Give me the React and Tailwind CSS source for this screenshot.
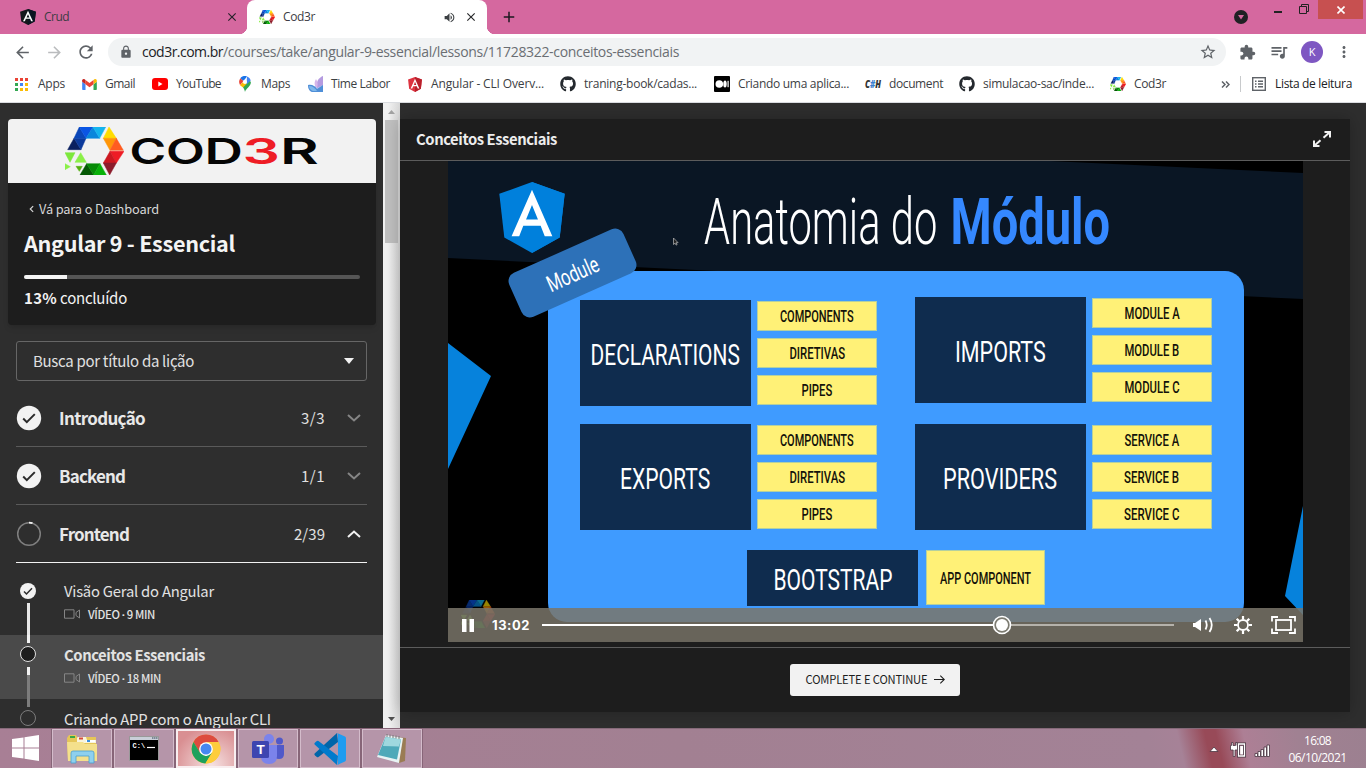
import { useLayoutEffect, useRef, useState } from "react";
import { FaGithub } from "react-icons/fa";
import {
  MdArrowBack,
  MdArrowForward,
  MdRefresh,
  MdLock,
  MdStarOutline,
  MdExtension,
  MdQueueMusic,
  MdMoreVert,
  MdClose,
  MdAdd,
  MdVolumeUp,
} from "react-icons/md";

// Text tracked so that its run takes exactly `w` pixels.
function Track({ w, children, className = "" }) {
  const ref = useRef(null);
  const [gap, setGap] = useState(0);
  useLayoutEffect(() => {
    const r = ref.current;
    const n = r.textContent.length;
    setGap((w - r.getBoundingClientRect().width) / n);
  }, [w]);
  return (
    <span ref={ref} className={"inline-block whitespace-pre " + className} style={{ letterSpacing: gap + "px" }}>
      {children}
    </span>
  );
}

// Text condensed or widened horizontally to `w` pixels.
function Stretch({ w, children, className = "" }) {
  const ref = useRef(null);
  const [scale, setScale] = useState(1);
  useLayoutEffect(() => {
    setScale(w / ref.current.offsetWidth);
  }, [w]);
  return (
    <span className={"flex justify-center " + className} style={{ width: w + "px" }}>
      <span ref={ref} className="inline-block shrink-0 whitespace-pre" style={{ transform: `scaleX(${scale})` }}>
        {children}
      </span>
    </span>
  );
}

const UI = "font-['Open_Sans',sans-serif]";
const SRC = "font-['Noto_Sans_CJK_SC',sans-serif]";

const HEX = [
  ["8,68 48,68 27,34", "#0a2060"],
  ["27,34 48,68 63,34", "#0c3a9c"],
  ["43,0 27,34 63,34", "#0a46b8"],
  ["43,0 84,0 63,34", "#0a55e4"],
  ["84,0 63,34 104,34", "#0a86dc"],
  ["84,0 122,0 104,34", "#14b4ee"],
  ["132,0 115,34 154,34", "#ffdc00"],
  ["115,34 154,34 135,70", "#ff9608"],
  ["154,34 135,70 175,70", "#ff5c20"],
  ["135,73 177,73 154,108", "#ee1c25"],
  ["135,73 154,108 115,108", "#cc1820"],
  ["115,108 154,108 134,144", "#8c1d2c"],
  ["65,110 45,144 86,144", "#045804"],
  ["65,110 105,110 86,144", "#068a06"],
  ["105,110 86,144 124,144", "#08b008"],
  ["0,77 30,77 15,106", "#7de83c"],
  ["47,77 30,106 64,106", "#8bf048"],
  ["0,110 16,119 0,128", "#8bf048"],
  ["33,118 52,118 43,133", "#55b010"],
];

function CoderMark({ className }) {
  return (
    <svg viewBox="0 0 177 144" preserveAspectRatio="none" className={className}>
      {HEX.map(([p, c]) => (
        <polygon key={p} points={p} fill={c} stroke={c} strokeWidth="1.500" />
      ))}
    </svg>
  );
}

function Shield({ className, base, shade, letter = "#fff" }) {
  return (
    <svg viewBox="31 30 188 200" preserveAspectRatio="none" className={className}>
      <path fill={base} d="M125 30 31.9 63.2 46.1 186.3 125 230 203.9 186.3 218.1 63.2z" />
      <path fill={shade} d="M125 30v200l78.9-43.7 14.2-123.1z" />
      <path fill={letter} fillRule="evenodd" d="M125 52.1 66.8 182.6h21.7l11.7-29.2h49.4l11.7 29.2H183zM142 135.4h-34l17-40.9z" />
    </svg>
  );
}

function Tabs() {
  return (
    <div className={"flex h-[34px] bg-[#d5689f] text-xs text-[#3c3c44] " + UI}>
      <div className="flex w-[247px] items-center pl-5">
        <Shield className="h-4 w-4" base="#14161c" shade="#0a1420" />
        <div className="w-[180px] pl-2">
          <Track w={25}>Crud</Track>
        </div>
        <MdClose className="ml-[9px] size-[14px] text-[#27222a]" />
      </div>
      <div className="relative flex w-[240px] items-center rounded-t-lg bg-white pl-3">
        <span className="absolute bottom-0 -left-2 size-2 bg-[radial-gradient(circle_at_0_0,transparent_8px,white_8.5px)]" />
        <span className="absolute -right-2 bottom-0 size-2 bg-[radial-gradient(circle_at_100%_0,transparent_8px,white_8.5px)]" />
        <CoderMark className="h-[14px] w-4" />
        <div className="w-[169px] pl-2">
          <Track w={32}>Cod3r</Track>
        </div>
        <MdVolumeUp className="-ml-[1px] size-[13px] text-[#3c4043]" />
        <MdClose className="ml-[8px] size-[14px] text-[#27282a]" />
      </div>
      <MdAdd className="mt-[8px] ml-[13px] size-[18px] text-[#1d1820]" />
      <div className="ml-auto flex items-start">
        <svg viewBox="0 0 14 14" className="mt-[10px] size-[14px]">
          <circle cx="7" cy="7" r="7" fill="#202124" />
          <path d="M4 5h6L7 9.5z" fill="#d5689f" />
        </svg>
        <svg viewBox="0 0 8 2" className="mt-[11px] ml-[26px] h-[2px] w-2">
          <path d="M0 0h8v2H0z" fill="#222" />
        </svg>
        <svg viewBox="0 0 10 10" className="mt-1 ml-[17px] size-[10px]" fill="none" stroke="#222">
          <path d="M.5 2.5h7v7h-7zM2.5 2.5v-2h7v7h-2" />
        </svg>
        <div className="mr-[3px] ml-[9px] flex h-[19px] w-[45px] items-center justify-center bg-[#c75050]">
          <svg viewBox="0 0 8 8" className="size-2" stroke="#fff" strokeWidth="1.6">
            <path d="M.5.5l7 7M7.5.5l-7 7" />
          </svg>
        </div>
      </div>
    </div>
  );
}

function Toolbar() {
  return (
    <div className={"flex h-9 items-center bg-white pl-[13px] " + UI}>
      <MdArrowBack className="size-[19px] text-[#5f6368]" />
      <MdArrowForward className="ml-[13px] size-[19px] text-[#babcbe]" />
      <MdRefresh className="ml-[12px] size-[20px] text-[#5f6368]" />
      <div className="ml-3 flex h-7 w-[1118px] items-center rounded-full bg-[#f1f3f4] pl-[11px] text-sm text-[#6a6e73]">
        <MdLock className="size-[14px] text-[#5f6368]" />
        <div className="ml-[9px] flex">
          <Track w={81} className="text-[#202124]">cod3r.com.br</Track>
          <Track w={456}>/courses/take/angular-9-essencial/lessons/11728322-conceitos-essenciais</Track>
        </div>
        <MdStarOutline className="mr-[9px] ml-auto size-[18px] text-[#5f6368]" />
      </div>
      <MdExtension className="ml-[13px] size-[17px] text-[#5f6368]" />
      <MdQueueMusic className="ml-[13px] size-5 text-[#5f6368]" />
      <div className="ml-3 flex size-[22px] items-center justify-center rounded-full bg-[#7e57c2] text-[11px] text-white">K</div>
      <MdMoreVert className="ml-3 size-[18px] text-[#5f6368]" />
    </div>
  );
}

function AppsIcon() {
  const c = ["#ea4335", "#ea4335", "#ea4335", "#34a853", "#4285f4", "#fbbc04", "#34a853", "#fbbc04", "#fbbc04"];
  return (
    <svg viewBox="0 0 13 13" className="size-[13px]">
      {c.map((f, i) => (
        <rect key={i} x={(i % 3) * 5} y={Math.floor(i / 3) * 5} width="3" height="3" fill={f} />
      ))}
    </svg>
  );
}

function GmailIcon() {
  return (
    <svg viewBox="52 42 88 66" className="h-[11px] w-[15px]">
      <path fill="#4285f4" d="M58 108h14V74L52 59v43c0 3.32 2.69 6 6 6" />
      <path fill="#34a853" d="M120 108h14c3.32 0 6-2.69 6-6V59l-20 15" />
      <path fill="#fbbc04" d="M120 48v26l20-15v-8c0-7.42-8.47-11.65-14.4-7.2" />
      <path fill="#ea4335" d="M72 74V48l24 18 24-18v26L96 92" />
      <path fill="#c5221f" d="M52 51v8l20 15V48l-5.6-4.2c-5.94-4.45-14.4-.22-14.4 7.2" />
    </svg>
  );
}

function MapsIcon() {
  return (
    <svg viewBox="0 0 12 16" className="h-4 w-3">
      <path fill="#34a853" d="M6 16c.6-3.600 5.900-5.300 5.900-10.100L9 3 3.500 10.500C5 12.500 5.500 14 6 16z" />
      <path fill="#fbbc04" d="M1 9l4-4 3 2.500-4 4C3 10.500 1.700 10 1 9z" />
      <path fill="#ea4335" d="M1.400 2.200L4.500 5 1 9C-.3 6.800-.2 4.200 1.400 2.200z" />
      <path fill="#1a73e8" d="M1.400 2.200C3-.1 6-.6 8 .4L4.500 5z" />
      <path fill="#4285f4" d="M8 .4c2 .8 3.200 2 3.700 4L7.500 8.500z" />
      <circle cx="6" cy="5.900" r="2.100" fill="#fff" />
    </svg>
  );
}

function TimeIcon() {
  return (
    <svg viewBox="0 0 16 16" className="size-4">
      <path fill="#b9c9ee" d="M15 0v16H4C1 15 0 12 0 9l6 2z" />
      <path fill="#b59be0" d="M15 0c-5 2-7 6-6 12l6-3z" />
      <path fill="#d6b6ea" d="M8 3c2 3 2 6 1 9-3-2-3-6-1-9z" />
      <path fill="#4f8fd8" d="M0 9c4-1 7 1 9 4l6-4v7H4C1 15 0 12 0 9z" />
      <path fill="#7fb8ea" d="M1 10c4 0 6 2 8 5H5c-2-1-4-2-4-5z" />
    </svg>
  );
}

function YoutubeIcon() {
  return (
    <svg viewBox="0 0 16 12" className="h-3 w-4">
      <rect width="16" height="12" rx="3" fill="#f00" />
      <path d="M6.300 3.500v5l4.200-2.500z" fill="#fff" />
    </svg>
  );
}

function MediumIcon() {
  return (
    <svg viewBox="0 0 16 16" className="size-4">
      <rect width="16" height="16" rx="1" fill="#000" />
      <circle cx="5.300" cy="8" r="3.800" fill="#fff" />
      <ellipse cx="11" cy="8" rx="1.700" ry="3.500" fill="#fff" />
      <rect x="13.500" y="4.800" width="1.200" height="6.400" fill="#fff" />
    </svg>
  );
}

function ListIcon() {
  return (
    <svg viewBox="0 0 14 14" className="size-[14px]" fill="none" stroke="#5f6368">
      <rect x=".7" y=".7" width="12.600" height="12.600" strokeWidth="1.400" />
      <path strokeWidth="1.500" d="M3 4.200h1.500M6 4.200h5M3 7h1.500M6 7h5M3 9.800h1.500M6 9.800h5" />
    </svg>
  );
}

function Bookmark({ icon, gap, lead, w, children }) {
  return (
    <div className="flex items-center" style={{ marginLeft: lead }}>
      {icon}
      <span style={{ marginLeft: gap }}>
        <Track w={w}>{children}</Track>
      </span>
    </div>
  );
}

function Bookmarks() {
  return (
    <div className={"flex h-[33px] items-center border-b border-[#dadce0] bg-white pb-1 text-xs text-[#3c4043] " + UI}>
      <Bookmark lead={15} gap={10} w={27} icon={<AppsIcon />}>Apps</Bookmark>
      <Bookmark lead={17} gap={8} w={30} icon={<GmailIcon />}>Gmail</Bookmark>
      <Bookmark lead={17} gap={8} w={45} icon={<YoutubeIcon />}>YouTube</Bookmark>
      <Bookmark lead={18} gap={10} w={29} icon={<MapsIcon />}>Maps</Bookmark>
      <Bookmark lead={18} gap={7} w={59} icon={<TimeIcon />}>Time Labor</Bookmark>
      <Bookmark lead={18} gap={9} w={113} icon={<Shield className="h-[15px] w-[14px]" base="#dd3340" shade="#b8202c" />}>Angular - CLI Overv...</Bookmark>
      <Bookmark lead={16} gap={8} w={113} icon={<FaGithub className="size-4 text-[#24292e]" />}>traning-book/cadas...</Bookmark>
      <Bookmark lead={17} gap={8} w={111} icon={<MediumIcon />}>Criando uma aplica...</Bookmark>
      <Bookmark
        lead={16}
        gap={8}
        w={54}
        icon={
          <span className="w-4 text-[10px] leading-4 font-extrabold text-[#333] italic">
            <Stretch w={16}>C<span className="text-[#3b7fd0]">#</span>H</Stretch>
          </span>
        }
      >
        document
      </Bookmark>
      <Bookmark lead={16} gap={8} w={111} icon={<FaGithub className="size-4 text-[#24292e]" />}>simulacao-sac/inde...</Bookmark>
      <Bookmark lead={16} gap={8} w={32} icon={<CoderMark className="h-[14px] w-4" />}>Cod3r</Bookmark>
      <svg viewBox="0 0 9 7" className="ml-[55px] h-[7px] w-[9px]" fill="none" stroke="#5f6368" strokeWidth="1.500">
        <path d="M1 .5l3 3-3 3M5 .5l3 3-3 3" />
      </svg>
      <div className="mr-[11px] ml-[10px] h-4 w-px bg-[#c8cacc]" />
      <ListIcon />
      <span className="ml-[9px] text-[#202124]">
        <Track w={77}>Lista de leitura</Track>
      </span>
    </div>
  );
}

function CourseCard() {
  return (
    <div className="mx-[7px] mt-4 ml-2 h-[206px] w-[368px] shrink-0 overflow-hidden rounded bg-[#1d1d1d] shadow-md">
      <div className="flex h-16 items-center bg-[#f2f2f2] pl-[57px]">
        <CoderMark className="h-12 w-[59px]" />
        <div className="ml-[5px] flex font-['Inter',sans-serif] text-[35px] leading-[50px] font-semibold text-[#050505]">
          <Stretch w={37}>C</Stretch>
          <Stretch w={39}>O</Stretch>
          <Stretch w={38}>D</Stretch>
          <Stretch w={37} className="text-[#ee1c25]">3</Stretch>
          <Stretch w={39}>R</Stretch>
        </div>
      </div>
      <div className="mt-[17px] flex h-[17px] items-center pl-5 text-[12.800px] text-[#d6d6d6]">
        <svg viewBox="0 0 6 8" className="mr-[5px] ml-[1px] h-2 w-[5px]" fill="none" stroke="#d6d6d6" strokeWidth="1.400">
          <path d="M5 .5L1.500 4 5 7.500" />
        </svg>
        <Track w={120}>Vá para o Dashboard</Track>
      </div>
      <div className="mt-[10px] ml-4 h-8 text-[21.600px] leading-8 font-bold text-[#f4f4f4]">
        <Track w={211}>Angular 9 - Essencial</Track>
      </div>
      <div className="mt-4 ml-4 h-1 w-[336px] overflow-hidden rounded-full bg-[#555]">
        <div className="h-1 w-[43px] bg-[#f4f4f4]" />
      </div>
      <div className="mt-[7px] ml-4 flex h-6 items-center text-[15px] leading-6 text-[#f2f2f2]">
        <Track w={33} className="font-bold">13%</Track>
        <Track w={70}> concluído</Track>
      </div>
    </div>
  );
}

function Chapter({ title, w, count, cw, done, open }) {
  return (
    <div className={"mx-4 flex h-[58px] w-[351px] shrink-0 items-center border-b " + (open ? "border-[#f2f2f2]" : "border-[#5a5a5a]")}>
      <svg viewBox="0 0 26 26" className="size-[26px]" fill="none">
        {done ? (
          <>
            <circle cx="13" cy="13" r="12.200" fill="#f2f2f2" />
            <path d="M7.200 13.500l3.600 3.600 8-8" stroke="#2a2a2a" strokeWidth="2" />
          </>
        ) : (
          <>
            <circle cx="13" cy="13" r="11.300" stroke="#7f7f7f" strokeWidth="1.500" />
            <path d="M13 1.700a11.300 11.300 0 0 1 3.500.5" stroke="#f2f2f2" strokeWidth="1.800" />
          </>
        )}
      </svg>
      <span className="ml-[17px] text-[17px] leading-6 font-bold text-[#e8e8e8]">
        <Track w={w}>{title}</Track>
      </span>
      <span className="ml-auto text-[15px] leading-6 text-[#e0e0e0]">
        <Track w={cw}>{count}</Track>
      </span>
      <svg viewBox="0 0 14 8" className="mr-[6px] ml-[22px] h-2 w-[14px]" fill="none" stroke={open ? "#f2f2f2" : "#858585"} strokeWidth="2">
        <path d={open ? "M1 7l6-5.500L13 7" : "M1 1l6 5.500L13 1"} />
      </svg>
    </div>
  );
}

function Lesson({ title, w, length, mw, state }) {
  return (
    <div className={"flex h-16 shrink-0 " + (state === "current" ? "bg-[#4a4a4a]" : "")}>
      <div className="ml-[19px] flex w-[18px] flex-col items-center">
        {state === "done" && (
          <>
            <svg viewBox="0 0 16 16" className="mt-3 size-4 shrink-0" fill="none">
              <circle cx="8" cy="8" r="8" fill="#f2f2f2" />
              <path d="M4 8.500l2.500 2.500 5.500-5.700" stroke="#2e2e2e" strokeWidth="1.500" />
            </svg>
            <div className="mt-1 w-[3px] grow bg-[#e8e8e8]" />
          </>
        )}
        {state === "current" && (
          <>
            <div className="h-2 w-[3px] shrink-0 bg-[#f2f2f2]" />
            <div className="mt-[3px] size-4 shrink-0 rounded-full border-[1.500px] border-[#e0e0e0] bg-[#1d1d1d]" />
            <div className="mt-[5px] h-2 w-[3px] shrink-0 bg-[#f2f2f2]" />
            <div className="w-[3px] grow bg-[#7c7c7c]" />
          </>
        )}
        {state === "todo" && (
          <>
            <div className="h-2 w-[3px] bg-[#7c7c7c]" />
            <div className="mt-[3px] size-4 rounded-full border-[1.500px] border-[#7c7c7c]" />
          </>
        )}
      </div>
      <div className="ml-[27px] pt-[8px] text-[#e2e2e2]">
        <div className={"h-6 text-[14.800px] leading-6 " + (state === "current" ? "font-bold" : "")}>
          <Track w={w}>{title}</Track>
        </div>
        {length && (
          <div className="mt-[2px] flex h-[18px] items-center text-[11.300px] leading-[18px] font-medium">
            <svg viewBox="0 0 16 10" className="mr-2 h-[10px] w-4" fill="none" stroke="#858585">
              <path d="M.5.8h9.500v8.400H.5zM12 3.500L15.500 1v8L12 6.500z" />
            </svg>
            <Track w={mw}>
              VÍDEO <span className="font-['Open_Sans',sans-serif] font-bold">·</span> {length}
            </Track>
          </div>
        )}
      </div>
    </div>
  );
}

function Sidebar() {
  return (
    <aside className={"flex w-[383px] flex-col overflow-hidden bg-[#2e2e2e] " + SRC}>
      <CourseCard />
      <div className="mt-4 mb-2 ml-4 flex h-10 w-[351px] shrink-0 items-center rounded-[3px] border border-[#666] pl-4 text-[15px] leading-6 text-[#e0e0e0]">
        <Track w={161}>Busca por título da lição</Track>
        <svg viewBox="0 0 10 6" className="mr-3 ml-auto h-[6px] w-[10px]">
          <path d="M0 0h10L5 6z" fill="#f2f2f2" />
        </svg>
      </div>
      <Chapter title="Introdução" w={86} count="3/3" cw={24} done />
      <Chapter title="Backend" w={66} count="1/1" cw={24} done />
      <Chapter title="Frontend" w={70} count="2/39" cw={31} open />
      <div className="h-2 shrink-0" />
      <Lesson title="Visão Geral do Angular" w={150} length="9 MIN" mw={67} state="done" />
      <Lesson title="Conceitos Essenciais" w={141} length="18 MIN" mw={73} state="current" />
      <Lesson title="Criando APP com o Angular CLI" w={207} state="todo" />
    </aside>
  );
}

function Scrollbar() {
  return (
    <div className="flex w-[17px] flex-col items-center bg-[linear-gradient(90deg,#f1f1f1_30%,#d8d8d8)]">
      <svg viewBox="0 0 17 17" className="size-[17px]">
        <path d="M5 11h7L8.500 7z" fill="#a3a3a3" />
      </svg>
      <div className="h-[123px] w-[13px] bg-[#c1c1c1]" />
      <svg viewBox="0 0 17 17" className="mt-auto size-[17px]">
        <path d="M5 6h7L8.500 10z" fill="#505050" />
      </svg>
    </div>
  );
}

function Group({ className, name, w, items }) {
  return (
    <div className={"absolute flex gap-[6px] " + className}>
      <div className="flex h-[106px] w-[171px] items-center justify-center bg-[#0f2c4e] pt-[3px] text-[30px] leading-none text-white">
        <Stretch w={w}>{name}</Stretch>
      </div>
      <div className="flex flex-col gap-[7px] pt-px">
        {items.map(([t, iw]) => (
          <div key={t} className="flex h-[30px] w-[120px] items-center justify-center border border-[#b4d0a0] bg-[#fff177] pt-[2px] text-[16px] leading-none font-medium text-[#14120a]">
            <Stretch w={iw}>{t}</Stretch>
          </div>
        ))}
      </div>
    </div>
  );
}

const PARTS = [["COMPONENTS", 74], ["DIRETIVAS", 56], ["PIPES", 31]];
const MODULES = [["MODULE A", 55], ["MODULE B", 55], ["MODULE C", 55]];
const SERVICES = [["SERVICE A", 55], ["SERVICE B", 55], ["SERVICE C", 55]];

function Controls() {
  return (
    <div className="absolute bottom-0 left-0 flex h-[34px] w-full items-center bg-[#7a766a]/85 pl-[14px]">
      <svg viewBox="0 0 12 13" className="h-[13px] w-3" fill="#fff">
        <path d="M0 0h4.500v13H0zM7.500 0H12v13H7.500z" />
      </svg>
      <span className="ml-[18px] w-[50px] font-['Inter',sans-serif] text-[13px] leading-none font-bold text-white">
        <Track w={38}>13:02</Track>
      </span>
      <div className="relative flex h-[2px] w-[632px] bg-[#b5b2ab]">
        <div className="h-[2px] w-[460px] bg-white" />
        <svg viewBox="0 0 20 20" className="absolute -top-[9px] left-[450px] size-5">
          <circle cx="10" cy="10" r="8.500" fill="#7d7c72" stroke="#fff" strokeWidth="1.600" />
          <circle cx="10" cy="10" r="6" fill="#fff" />
        </svg>
      </div>
      <svg viewBox="0 0 20 16" className="ml-[19px] h-4 w-5" fill="none" stroke="#fff" strokeWidth="1.800">
        <path d="M0 6h2l6-4v12l-6-4H0z" fill="#fff" stroke="none" />
        <path d="M12.500 3.500q2.500 4.500 0 9M16.500 1q4.500 7 0 14" />
      </svg>
      <svg viewBox="0 0 18 18" className="ml-[21px] size-[18px]" fill="none" stroke="#fff">
        <circle cx="9" cy="9" r="5" strokeWidth="1.800" />
        <path strokeWidth="2.200" d="M9 0v3.500M9 14.500V18M0 9h3.500M14.500 9H18M2.700 2.700l2.400 2.400M12.900 12.900l2.400 2.400M2.700 15.300l2.400-2.400M12.900 5.100l2.400-2.400" />
      </svg>
      <svg viewBox="0 0 25 18" className="ml-[19px] h-[18px] w-[25px]" fill="none" stroke="#fff" strokeWidth="1.800">
        <path d="M1 5.500V1h6M18 1h6v4.500M24 12.500V17h-6M7 17H1v-4.500" />
        <rect x="5" y="4" width="15" height="10" />
      </svg>
    </div>
  );
}

function Slide() {
  return (
    <div className="relative ml-12 h-[481px] w-[855px] overflow-hidden bg-black font-['Roboto',sans-serif]">
      <svg viewBox="0 0 855 481" className="absolute inset-0 h-full w-full">
        <path fill="#0a1624" d="M0 0h602l253 12v126L0 97z" />
        <path fill="#0682dc" d="M0 182l43 33L0 308zM855 345l-18 90 18 19z" />
        <rect x="100" y="110" width="696" height="351" rx="19" fill="#3f9bff" />
        <path d="M225.500 77v6.500l1.600-1.400 1 2 1-.5-1-1.900h2z" fill="#222" stroke="#bbb" strokeWidth=".7" />
      </svg>
      <Shield className="absolute top-[21px] left-[51px] h-[71px] w-[66px]" base="#0080dc" shade="#0080dc" />
      <div className="absolute top-[27px] left-[256px] flex gap-[13px] text-[65px] leading-[68px] text-white">
        <Stretch w={233} className="font-light">Anatomia do</Stretch>
        <Stretch w={160} className="font-bold text-[#3588ff]">Módulo</Stretch>
      </div>
      <Group className="top-[139px] left-[132px]" name="DECLARATIONS" w={149} items={PARTS} />
      <Group className="top-[136px] left-[467px]" name="IMPORTS" w={91} items={MODULES} />
      <Group className="top-[263px] left-[132px]" name="EXPORTS" w={90} items={PARTS} />
      <Group className="top-[263px] left-[467px]" name="PROVIDERS" w={114} items={SERVICES} />
      <div className="absolute top-[389px] left-[299px] flex gap-2">
        <div className="flex h-14 w-[171px] items-center justify-center bg-[#0f2c4e] pt-[3px] text-[30px] leading-none text-white">
          <Stretch w={119}>BOOTSTRAP</Stretch>
        </div>
        <div className="flex h-[55px] w-[119px] items-center justify-center border border-[#b4d0a0] bg-[#fff177] pt-[2px] text-[16px] leading-none font-medium text-[#14120a]">
          <Stretch w={91}>APP COMPONENT</Stretch>
        </div>
      </div>
      <div className="absolute top-[88px] left-[62px] flex h-[48px] w-[125px] -rotate-24 items-center justify-center rounded-[9px] bg-[#2d71b8] pt-[3px] text-[23px] leading-none text-white">
        <Stretch w={55}>Module</Stretch>
      </div>
      <CoderMark className="absolute top-[439px] left-[13px] h-7 w-[34px] opacity-60" />
      <Controls />
    </div>
  );
}

function Main() {
  return (
    <main className={"w-[966px] bg-[#2e2e2e] pt-4 " + SRC}>
      <div className="h-[593px] w-[950px] bg-[#1d1d1d] shadow-[0_0_16px_rgba(0,0,0,0.25)]">
        <div className="flex h-[42px] items-center border-b border-[#5c5c5c] pr-[19px] pl-4">
          <span className="-mt-[2px] text-[14.800px] leading-6 font-bold text-[#ececec]">
            <Track w={141}>Conceitos Essenciais</Track>
          </span>
          <svg viewBox="0 0 18 16" className="-mt-px ml-auto h-4 w-[18px]" fill="none" stroke="#f2f2f2" strokeWidth="2">
            <path d="M11.500 1H17v5.500M17 1l-6.500 5.800M6.500 15H1V9.500M1 15l6.500-5.800" />
          </svg>
        </div>
        <Slide />
        <div className="mt-[5px] flex h-16 justify-center border-t border-[#5c5c5c] pt-4">
          <div className="flex h-8 w-[170px] items-center justify-center rounded-[3px] bg-[#f2f2f2] pb-px text-[11.200px] text-[#1d1d1d]">
            <Track w={122}>COMPLETE E CONTINUE</Track>
            <svg viewBox="0 0 11 9" className="ml-[6px] h-[9px] w-[11px]" fill="none" stroke="#1d1d1d" strokeWidth="1.100">
              <path d="M0 4.500h10M6.300.7l4 3.800-4 3.800" />
            </svg>
          </div>
        </div>
      </div>
    </main>
  );
}

function ExplorerIcon() {
  return (
    <svg viewBox="0 0 32 30" className="h-[30px] w-8">
      <path d="M1 4l2-3h7l1 2h19v24H2z" fill="#e6c658" />
      <path d="M4 2h5v2H4z" fill="#3aa845" />
      <path d="M11 4l1-1h8l1 3h9v3H11z" fill="#f8f4dc" />
      <path d="M13 3.500h4v2h-4z" fill="#d94b3a" />
      <path d="M20 6h9v2h-9z" fill="#fff" />
      <path d="M21 6h3v2h-3z" fill="#3b8fe0" />
      <path d="M1 8h16l2 2h12v17H2z" fill="#f4e08c" />
      <path d="M5 29V19q0-2 2-2h19q2 0 2 2v10h-5v-7H10v7z" fill="#8ed0ee" stroke="#4a9fce" strokeWidth=".8" />
    </svg>
  );
}

function TerminalIcon() {
  return (
    <svg viewBox="0 0 30 25" className="h-[25px] w-[30px]">
      <rect x=".5" y=".5" width="29" height="24" fill="#000" stroke="#999" />
      <path d="M1 1h28v3H1z" fill="#c9ced8" />
      <path d="M23 2h1.500M25 2h1.500M27 2h1.500" stroke="#345" />
      <text x="3.500" y="12" fontSize="7" fontFamily="Liberation Mono" fontWeight="700" fill="#fff">C:\</text>
      <path d="M18 11.500h8" stroke="#fff" strokeWidth="1.200" />
    </svg>
  );
}

function ChromeIcon() {
  return (
    <svg viewBox="0 0 48 48" className="size-[30px]">
      <circle cx="24" cy="24" r="23" fill="#fbc62f" />
      <path d="M4 12.600A23 23 0 0 1 44 12.600L24 13 14 30z" fill="#dd4b3e" />
      <path d="M4 12.600A23 23 0 0 0 23 47L34 29.500 24 35 14.500 30z" fill="#1da15c" />
      <path d="M44 12.600A23 23 0 0 1 23 47L34 29 33 17 24 12.600z" fill="#fdcd3c" />
      <circle cx="24" cy="24" r="11" fill="#fff" />
      <circle cx="24" cy="24" r="8.800" fill="#4688f1" />
    </svg>
  );
}

function TeamsIcon() {
  return (
    <svg viewBox="0 0 32 30" className="h-[30px] w-8">
      <circle cx="17" cy="5" r="5" fill="#7b83eb" />
      <circle cx="27.500" cy="7" r="3.500" fill="#5059c9" />
      <path d="M22 11h10v9q0 5-5 5t-5-4z" fill="#5059c9" />
      <path d="M10 11h15v11q0 8-8 8t-8-8z" fill="#7b83eb" />
      <rect y="7" width="17" height="17" rx="1.500" fill="#3d45b0" />
      <text x="8.500" y="20" textAnchor="middle" fontSize="13.500" fontFamily="Liberation Sans" fontWeight="700" fill="#fff">T</text>
    </svg>
  );
}

function CodeIcon() {
  return (
    <svg viewBox="0 0 32 32" className="size-8">
      <path d="M23 0l1 9L4.500 24q-1 .6-2-.3l-1.600-1.500q-1-1 0-2z" fill="#0065a9" />
      <path d="M23 32l1-9L4.500 8q-1-.6-2 .3L.9 9.800q-1 1 0 2z" fill="#007acc" />
      <path d="M23 0l8 3.500q1 .5 1 2v21q0 1.500-1 2L23 32q1-1 1-2V2q0-1-1-2z" fill="#1f9cf0" />
    </svg>
  );
}

function NotepadIcon() {
  return (
    <svg viewBox="0 0 32 30" className="h-[30px] w-8">
      <path d="M11 2l19 2-1 23-6 2z" fill="#9a7c54" />
      <path d="M10 1l17 3-4 25-22-6z" fill="#e8f3f4" />
      <path d="M9.500 3l15.500 2.500-4 20L2 21z" fill="#4ea9b9" />
      <path d="M9.500 3l15.500 2.500-2 7L7 12z" fill="#9fd8de" />
      <path d="M11 0v3M14 .5v3M17 1v3M20 1.500v3M23 2v3" stroke="#777" />
    </svg>
  );
}

function TaskButton({ active, children }) {
  return (
    <div
      className={
        "flex h-[39px] w-[60px] items-center justify-center border outline outline-[#876578] " +
        (active
          ? "border-2 border-[#f8eef0] bg-[radial-gradient(circle_at_60%_100%,#f6e2e2,#d98f92_80%)]"
          : "border-[#d4bccb] bg-[#b595a9]")
      }
    >
      {children}
    </div>
  );
}

function Taskbar() {
  return (
    <footer className={"flex h-10 border-t border-[#866a7a] bg-[linear-gradient(77deg,#a87f95_0%,#a28092_50%,#a38296_84%,#a68297_86.200%,#984a58_88.200%,#984a58_89%,#ad7f95_91%,#a08192_95%,#9c8090_100%)] " + UI}>
      <svg viewBox="0 0 27 26" className="mt-[6px] mr-[13px] ml-3 h-[26px] w-[27px]" fill="#fff">
        <path d="M0 4l11.500-1.600v10H0zM12.500 2.200L27 0v12.400H12.500zM0 13.500h11.500v10L0 22zM12.500 13.500H27V26l-14.500-2.200z" />
      </svg>
      <div className="flex gap-[2px]">
        <TaskButton><ExplorerIcon /></TaskButton>
        <TaskButton><TerminalIcon /></TaskButton>
        <TaskButton active><ChromeIcon /></TaskButton>
        <TaskButton><TeamsIcon /></TaskButton>
        <TaskButton><CodeIcon /></TaskButton>
        <TaskButton><NotepadIcon /></TaskButton>
      </div>
      <svg viewBox="0 0 62 18" className="mt-3 ml-auto h-[18px] w-[62px]" stroke="#4a3643" strokeWidth=".8" fill="#fff">
        <path d="M1 10.500h8L5 6z" />
        <path d="M22.500 1.500h1.500v3h2.500v-3H28v3h.8v4.500h-2.800v6.500h-1.800V9h-2.700V4.500h1z" />
        <path fill="none" stroke="#4a3643" strokeWidth="3" d="M29.500 3h6v12h-6z" />
        <path fill="none" stroke="#fff" strokeWidth="1.300" d="M29.500 3h6v12h-6z" />
        <path stroke="none" d="M31.200 5h2.800v8.500h-2.800z" />
        <path d="M46 12.500h2.500v3H46zM49 10.500h2.500v5H49zM52 8.500h2.500v7H52zM55 6h2.500v9.500H55zM58 4h2.500v11.500H58z" />
      </svg>
      <div className="mt-[3px] mr-[19px] ml-[17px] flex w-[59px] flex-col items-center text-xs leading-[17px] text-white">
        <Track w={27}>16:08</Track>
        <Track w={58}>06/10/2021</Track>
      </div>
    </footer>
  );
}

export default function App() {
  return (
    <div className="flex h-[768px] w-[1366px] flex-col overflow-hidden">
      <Tabs />
      <Toolbar />
      <Bookmarks />
      <div className="flex h-[625px] shrink-0">
        <Sidebar />
        <Scrollbar />
        <Main />
      </div>
      <Taskbar />
    </div>
  );
}
